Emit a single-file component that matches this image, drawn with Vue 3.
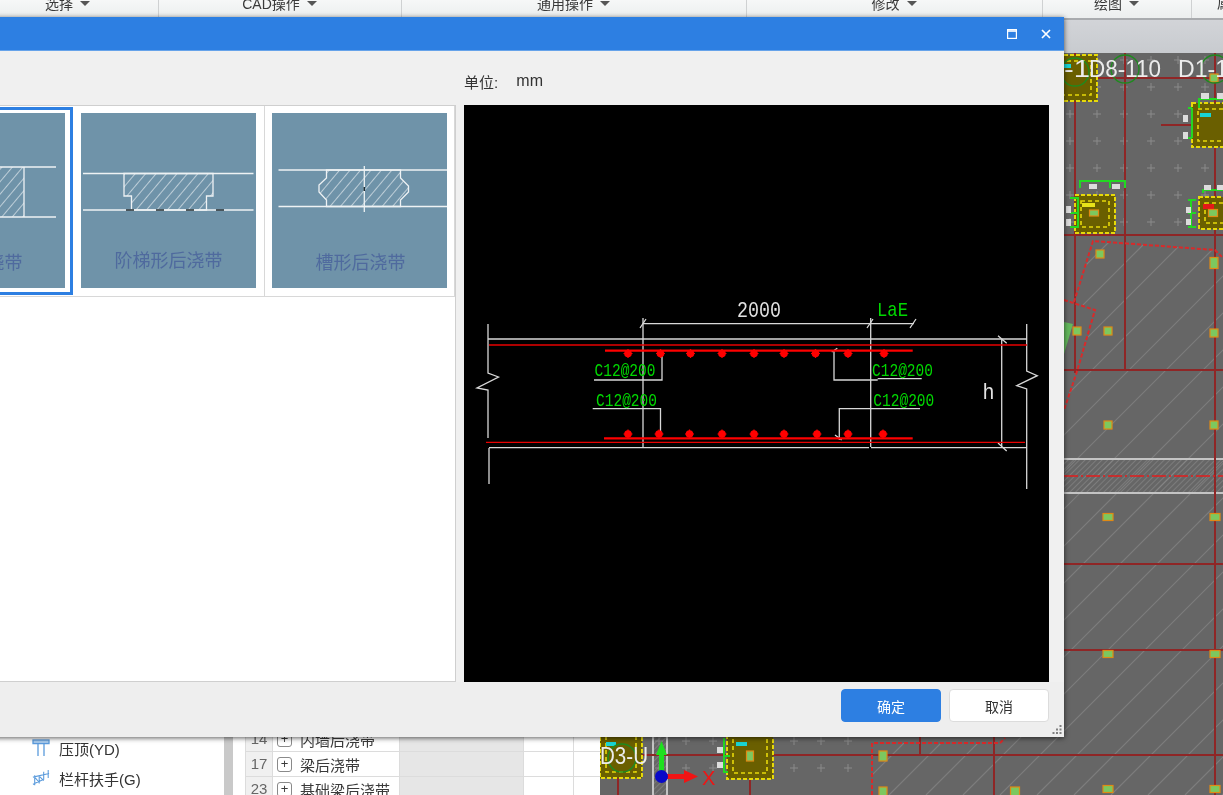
<template>
  <div class="app">
    <!-- 顶部工具栏 -->
    <div class="ribbon">
      <div v-for="g in ribbonGroups" :key="g.name" class="ribbon-group" :style="{ width: g.width + 'px' }">
        <span>{{ g.name }}</span><i class="caret"></i>
      </div>
      <div class="ribbon-last">属性</div>
    </div>
    <div class="ribbon-edge"></div>

    <div class="workspace">
      <!-- 构件树 -->
      <div class="tree">
        <div class="tree-list">
          <div class="tree-item">
            <svg viewBox="0 0 18 18" width="18" height="18" fill="none" stroke="#5b9bdc" stroke-width="1.3">
              <rect x="1" y="1" width="16" height="3.6" fill="#a9ccef" />
              <path d="M6 4.6V17M12 4.6V17" />
            </svg>
            <span>压顶(YD)</span>
          </div>
          <div class="tree-item">
            <svg viewBox="0 0 20 20" width="18" height="18" fill="none" stroke="#5b9bdc" stroke-width="1.2">
              <path d="M1 9l18-4M3 7v11M8 7v9M13 3v9M18 1v9M1 17l11-5M3 9l5 6M8 8l5 5" />
            </svg>
            <span>栏杆扶手(G)</span>
          </div>
        </div>
      </div>
      <div class="tree-scroll"></div>

      <!-- 构件列表 -->
      <div class="table-pane">
        <div v-for="r in rows" :key="r.no" class="row">
          <div class="cell-no">{{ r.no }}</div>
          <div class="cell-name"><i class="plus">+</i><span>{{ r.name }}</span></div>
          <div class="cell-gray"></div>
          <div class="cell-blank"></div>
        </div>
      </div>

      <!-- 绘图区 -->
      <div class="canvas-wrap">
        <div class="tab-strip"></div>
        <svg class="cad" width="623" height="742" viewBox="600 53 623 742">
          <defs>
            <clipPath id="slab"><polygon :points="slabPoints" /></clipPath>
            <pattern id="dense" width="4" height="4" patternUnits="userSpaceOnUse" patternTransform="rotate(45)">
              <line x1="0" y1="0" x2="0" y2="4" stroke="#8b8b8b" stroke-width="1.2" />
            </pattern>
          </defs>
          <rect x="600" y="53" width="623" height="742" fill="#666666" />

          <g stroke="#8a8a8a" stroke-width="1">
            <path v-for="c in crosses" :key="c.k" :d="c.d" />
          </g>

          <g clip-path="url(#slab)" stroke="#7d7d7d" stroke-width="1.2">
            <line v-for="l in hatchLines" :key="l" :x1="l" y1="795" :x2="l + 640" y2="155" />
          </g>

          <rect x="1064" y="460" width="159" height="33" fill="url(#dense)" />
          <rect x="653" y="737" width="14" height="58" fill="url(#dense)" />
          <path d="M1064 459H1223M1064 493H1223M653 737V795M667 737V795" stroke="#c4c4c4" stroke-width="2" />

          <g stroke="#8f2626" stroke-width="2">
            <path d="M1075 53V373M1125 53V370M1215 53V795M1064 78H1223M1161 125H1223M1064 235H1223M1064 370H1223M1064 564H1223M1064 650H1223M600 755H1223M618 737V795M750 737V795M920 737V755M994 737V795" />
          </g>
          <path d="M1064 476H1223" stroke="#e21c1c" stroke-width="1.4" stroke-dasharray="14 3 2 3" />

          <polyline v-for="(p, i) in slabOutlines" :key="i" :points="p" fill="none" stroke="#d92a2a" stroke-width="2" stroke-dasharray="4 2" />

          <!-- 柱 -->
          <g v-for="b in columns" :key="b.x + '-' + b.y">
            <rect :x="b.x" :y="b.y" :width="b.w" :height="b.h" fill="#6a5f00" stroke="#e6d90a" stroke-width="2" stroke-dasharray="4 2" />
            <rect :x="b.x + 6" :y="b.y + 6" :width="b.w - 12" :height="b.h - 12" fill="none" stroke="#e6d90a" stroke-width="1.6" stroke-dasharray="4 3" />
          </g>

          <g fill="none" stroke="#22d822" stroke-width="2">
            <path d="M1080 188V181H1125V188M1110 181V188M1070 198H1078V227H1070M1070 213H1078M1199 108V99H1223M1188 108H1192M1188 138H1192M1192 108V138M1203 193V190H1223M1191 200V227M1188 200H1196M1188 227H1196M1188 213H1196M724 738V772H728M724 756H730" />
          </g>

          <g fill="#dcdcdc">
            <rect v-for="t in tags" :key="t.x + '-' + t.y" :x="t.x" :y="t.y" :width="t.w" :height="t.h" />
          </g>
          <g fill="#19d4d4">
            <rect x="1064" y="64" width="7" height="4" />
            <rect x="1200" y="113" width="11" height="4" />
            <rect x="606" y="742" width="10" height="4" />
            <rect x="736" y="742" width="11" height="4" />
          </g>
          <rect x="1082" y="203" width="13" height="4" fill="#e8e21a" />
          <rect x="1203" y="204" width="11" height="5" fill="#e51818" />
          <polygon points="1064,322 1073,324 1064,354" fill="#63b85c" />

          <g fill="#7cc85f" stroke="#e08a14" stroke-width="1.2">
            <rect v-for="s in studs" :key="s.x + '-' + s.y" :x="s.x - s.w / 2" :y="s.y - s.h / 2" :width="s.w" :height="s.h" />
          </g>

          <g fill="none" stroke="#1f8a1f" stroke-width="1.4">
            <circle cx="1075" cy="72" r="14" />
            <circle cx="1125" cy="69" r="14" />
            <circle cx="1215" cy="69" r="14" />
            <circle cx="622" cy="758" r="14" />
          </g>
          <g class="axis-label">
            <text x="1064" y="77" textLength="26" lengthAdjust="spacingAndGlyphs">-1</text>
            <text x="1089" y="77" textLength="72" lengthAdjust="spacingAndGlyphs">D8-110</text>
            <text x="1178" y="77" textLength="50" lengthAdjust="spacingAndGlyphs">D1-1</text>
            <text x="600" y="764" textLength="48" lengthAdjust="spacingAndGlyphs">D3-U</text>
          </g>

          <!-- 坐标轴 -->
          <rect x="659" y="750" width="5" height="26" fill="#1fe01f" />
          <polygon points="661.5,741 667,755 656,755" fill="#1fe01f" />
          <rect x="662" y="774" width="22" height="5" fill="#f01414" />
          <polygon points="698,776.5 684,770 684,783" fill="#f01414" />
          <circle cx="661.5" cy="776.5" r="6.5" fill="#0808c8" />
          <text class="x-label" x="702" y="785">X</text>
        </svg>
      </div>
    </div>

    <!-- 弹窗 -->
    <div class="dialog">
      <div class="dialog-title">
        <svg class="win-icon" viewBox="0 0 10 10" width="10" height="10" fill="none" stroke="#fff" stroke-width="1.2">
          <rect x="0.6" y="0.6" width="8.8" height="8.8" />
          <path d="M0.6 2h8.8" stroke-width="1.6" />
        </svg>
        <svg class="win-icon close" viewBox="0 0 10 10" width="10" height="10" fill="none" stroke="#fff" stroke-width="1.7">
          <path d="M1 1l8 8M9 1l-8 8" />
        </svg>
      </div>

      <div class="dialog-body">
        <div class="gallery-col">
          <div class="gallery">
            <div class="thumb-row">
              <!-- 矩形 -->
              <div class="thumb selected">
                <svg width="175" height="175" viewBox="0 0 175 175">
                  <defs>
                    <pattern id="hatch" width="8" height="8" patternUnits="userSpaceOnUse" patternTransform="rotate(40)">
                      <line x1="0" y1="0" x2="0" y2="8" stroke="#fff" stroke-width="1.1" />
                    </pattern>
                  </defs>
                  <rect width="175" height="175" fill="#6f93a9" />
                  <rect x="42" y="54" width="92" height="50" fill="url(#hatch)" />
                  <path d="M10 54H166M10 104H166M42 54V104M134 54V104" stroke="#eef2f4" stroke-width="1.3" fill="none" />
                  <text x="87.5" y="156" class="thumb-label">矩形后浇带</text>
                </svg>
              </div>
              <!-- 阶梯形 -->
              <div class="thumb">
                <svg width="175" height="175" viewBox="0 0 175 175">
                  <rect width="175" height="175" fill="#6f93a9" />
                  <polygon points="43,60.5 132,60.5 132,83 125.5,83 125.5,97 50.5,97 50.5,83 43,83" fill="url(#hatch)" stroke="#eef2f4" stroke-width="1.3" />
                  <path d="M2 60.5H172.500M2 97H172.500" stroke="#eef2f4" stroke-width="1.3" fill="none" />
                  <path d="M45 97h8M75 97h8M105 97h8M135 97h8" stroke="#1d2a30" stroke-width="1.5" />
                  <text x="87.500" y="154" class="thumb-label">阶梯形后浇带</text>
                </svg>
              </div>
              <!-- 槽形 -->
              <div class="thumb">
                <svg width="175" height="175" viewBox="0 0 175 175">
                  <rect width="175" height="175" fill="#6f93a9" />
                  <polygon points="54.500,57 128.500,57 128.500,65 136.500,73 136.500,79 128.500,87 128.500,93.500 54.500,93.500 54.500,87 47,79 47,72 54.500,65" fill="url(#hatch)" stroke="#eef2f4" stroke-width="1.3" />
                  <path d="M6.500 57H175M6.500 93.500H175M92.300 53V99" stroke="#eef2f4" stroke-width="1.3" fill="none" />
                  <path d="M92.300 74v4" stroke="#1d2a30" stroke-width="1.5" />
                  <text x="88.500" y="156" class="thumb-label">槽形后浇带</text>
                </svg>
              </div>
            </div>
          </div>
        </div>

        <div class="preview-col">
          <div class="unit"><span>单位:</span><span class="unit-value">mm</span></div>
          <div class="preview">
            <svg width="585" height="577" viewBox="464 105 585 577">
              <g fill="none" stroke="#d8d8d8" stroke-width="1.300">
                <path d="M488 324V373L498.500 377L477 388L488 390V438M489 448V484" />
                <path d="M1026.700 324V371L1037.300 375.700L1016.700 385.700L1026.700 389V489" />
                <path d="M488 339H1027M489 447.700H869M871 447.700H1027" />
                <path d="M643 318V447.700M870.700 318V447" />
                <path d="M643 323.700H914" />
                <path d="M640 328L646 319M867 328L873 319M910 328L916 319" />
                <path d="M1001.700 339V447.700M998 335.700L1006.700 343.300M998 443L1006.700 451" />
                <path d="M594 380H662V355M592.700 408.700H660.500V433" />
                <path d="M831.700 352L837.300 348.300M834 350V380H877.700M877.700 378.700H921.700" />
                <path d="M920 408.700H839.300V440M835 435L841.700 440" />
              </g>
              <g fill="none" stroke="#e80000">
                <path d="M489 345H1027M486 442.300H1025" stroke-width="1.300" />
                <path d="M605 350.700H912.700M604 438.300H912.700" stroke-width="2.200" stroke="#ff0000" />
              </g>
              <g fill="#ff0000">
                <circle v-for="x in topBars" :key="'t' + x" :cx="x" cy="353.500" r="3.800" />
                <circle v-for="x in bottomBars" :key="'b' + x" :cx="x" cy="434" r="3.800" />
              </g>
              <path :d="barTicks" stroke="#ff0000" stroke-width="1.200" fill="none" />
              <g class="rebar-text">
                <text x="594.500" y="376" textLength="61" lengthAdjust="spacingAndGlyphs">C12@200</text>
                <text x="596" y="405.700" textLength="61" lengthAdjust="spacingAndGlyphs">C12@200</text>
                <text x="872" y="376" textLength="61" lengthAdjust="spacingAndGlyphs">C12@200</text>
                <text x="873.300" y="405.700" textLength="61" lengthAdjust="spacingAndGlyphs">C12@200</text>
                <text class="lae" x="877" y="316" textLength="31" lengthAdjust="spacingAndGlyphs">LaE</text>
              </g>
              <g class="dim-text">
                <text x="737" y="317" textLength="44" lengthAdjust="spacingAndGlyphs">2000</text>
                <text x="982.500" y="399" textLength="12" lengthAdjust="spacingAndGlyphs">h</text>
              </g>
            </svg>
          </div>
        </div>
      </div>

      <div class="dialog-foot">
        <button class="btn primary">确定</button>
        <button class="btn">取消</button>
        <svg class="grip" viewBox="0 0 10 10" width="10" height="10" fill="#808080">
          <rect x="7.500" y="0" width="2" height="2" />
          <rect x="4" y="3.500" width="2" height="2" />
          <rect x="7.500" y="3.500" width="2" height="2" />
          <rect x="0.500" y="7" width="2" height="2" />
          <rect x="4" y="7" width="2" height="2" />
          <rect x="7.500" y="7" width="2" height="2" />
        </svg>
      </div>
    </div>
  </div>
</template>

<script setup>
const ribbonGroups = [
  { name: '选择', width: 181 },
  { name: 'CAD操作', width: 243 },
  { name: '通用操作', width: 345 },
  { name: '修改', width: 296 },
  { name: '绘图', width: 149 },
]

const rows = [
  { no: 14, name: '内墙后浇带' },
  { no: 17, name: '梁后浇带' },
  { no: 23, name: '基础梁后浇带' },
]

const topBars = [628, 660.5, 690.5, 722, 754, 784, 815.5, 848, 884]
const bottomBars = [628, 659, 689.5, 722, 754, 784, 817, 848, 883]

// 钢筋点上的小十字
const tick = (x, y) => `M${x} ${y - 4.5}V${y + 4.5}M${x - 4.5} ${y}H${x + 4.5}`
const barTicks = [
  ...topBars.map((x) => tick(x, 353.5)),
  ...bottomBars.map((x) => tick(x, 434)),
].join('')

const slabPoints = '1093,241 1215,250 1223,258 1223,795 872,795 872,743 1005,743 1005,700 1064,700 1064,410 1095,310 1074,302'
const slabOutlines = [
  '1074,302 1093,241 1215,250 1223,258',
  '1064,300 1095,310 1076.500,373 1064,410',
  '872,795 872,743 1000,743 1005,738',
]

// 网格点
const crosses = []
for (let y = 60; y < 240; y += 27) {
  for (let x = 1070; x < 1223; x += 27) {
    crosses.push({ k: x + '-' + y, d: `M${x - 4} ${y}h8M${x} ${y - 4}v8` })
  }
}
for (let y = 741; y < 795; y += 27) {
  for (let x = 605; x < 870; x += 27) {
    crosses.push({ k: x + '-' + y, d: `M${x - 4} ${y}h8M${x} ${y - 4}v8` })
  }
}

const hatchLines = []
for (let x = 260; x < 1223; x += 37) hatchLines.push(x)

const columns = [
  { x: 1040, y: 55, w: 57, h: 46 },
  { x: 1192, y: 103, w: 60, h: 44 },
  { x: 1075, y: 195, w: 40, h: 38 },
  { x: 1199, y: 197, w: 50, h: 32 },
  { x: 600, y: 725, w: 42, h: 53 },
  { x: 727, y: 725, w: 46, h: 54 },
]

const studs = [
  { x: 1100, y: 254, w: 8, h: 8 },
  { x: 1214, y: 263, w: 8, h: 11 },
  { x: 1077, y: 331, w: 8, h: 8 },
  { x: 1108, y: 331, w: 8, h: 8 },
  { x: 1214, y: 333, w: 8, h: 8 },
  { x: 1108, y: 425, w: 8, h: 8 },
  { x: 1214, y: 425, w: 8, h: 8 },
  { x: 1108, y: 517, w: 10, h: 7 },
  { x: 1215, y: 517, w: 10, h: 7 },
  { x: 1108, y: 654, w: 10, h: 7 },
  { x: 1215, y: 654, w: 10, h: 7 },
  { x: 1108, y: 789, w: 10, h: 7 },
  { x: 1215, y: 789, w: 10, h: 7 },
  { x: 883, y: 756, w: 8, h: 10 },
  { x: 883, y: 792, w: 8, h: 10 },
  { x: 1015, y: 792, w: 9, h: 10 },
  { x: 1094, y: 213, w: 9, h: 6 },
  { x: 1213, y: 213, w: 9, h: 7 },
  { x: 1214, y: 78, w: 8, h: 8 },
  { x: 750, y: 756, w: 7, h: 10 },
]

const tags = [
  { x: 1201, y: 93, w: 8, h: 6 },
  { x: 1217, y: 93, w: 6, h: 6 },
  { x: 1183, y: 115, w: 5, h: 7 },
  { x: 1183, y: 132, w: 5, h: 7 },
  { x: 1089, y: 184, w: 8, h: 5 },
  { x: 1112, y: 184, w: 8, h: 5 },
  { x: 1066, y: 206, w: 5, h: 7 },
  { x: 1066, y: 219, w: 5, h: 7 },
  { x: 1204, y: 185, w: 7, h: 5 },
  { x: 1217, y: 185, w: 6, h: 5 },
  { x: 1186, y: 207, w: 5, h: 6 },
  { x: 1186, y: 219, w: 5, h: 6 },
  { x: 717, y: 747, w: 6, h: 6 },
  { x: 717, y: 762, w: 6, h: 6 },
]
</script>

<style>
html,
body {
  margin: 0;
  overflow: hidden;
}
</style>

<style scoped>
.app {
  position: relative;
  width: 1223px;
  height: 795px;
  overflow: hidden;
  background: #fff;
  font-family: "Liberation Sans", "Noto Sans CJK SC", sans-serif;
  font-size: 14px;
  color: #333;
  filter: blur(0.4px);
}

.ribbon {
  display: flex;
  height: 18px;
  margin-left: -23px;
  background: linear-gradient(#f6f7f7, #eceeee);
}

.ribbon-group {
  display: flex;
  align-items: center;
  justify-content: center;
  gap: 7px;
  height: 6px;
  padding-bottom: 12px;
  border-right: 1px solid #cfd1d2;
  box-sizing: content-box;
  flex-shrink: 0;
  color: #3a3a3a;
}

.ribbon-group:nth-child(n) {
  margin-right: -1px;
}

.caret {
  width: 0;
  height: 0;
  border-left: 5px solid transparent;
  border-right: 5px solid transparent;
  border-top: 5px solid #555;
}

.ribbon-last {
  padding: 0 0 0 26px;
  line-height: 6px;
  white-space: nowrap;
}

.ribbon-edge {
  height: 2px;
  background: #a9abae;
}

.workspace {
  display: flex;
  height: 775px;
}

.tree {
  width: 224px;
  flex-shrink: 0;
  padding-top: 718px;
  box-sizing: border-box;
}

.tree-list {
  display: flex;
  flex-direction: column;
  gap: 10px;
  padding-left: 32px;
}

.tree-item {
  display: flex;
  align-items: center;
  gap: 9px;
  height: 20px;
  font-size: 15px;
}

.tree-scroll {
  width: 9px;
  flex-shrink: 0;
  background: #c9c9c9;
}

.table-pane {
  width: 367px;
  flex-shrink: 0;
  box-sizing: border-box;
  padding: 707px 0 0 12px;
  background: #fff;
  overflow: hidden;
}

.row {
  display: grid;
  grid-template-columns: 27px 126px 124px 51px;
  height: 25px;
  border-bottom: 1px solid #dcdcdc;
  box-sizing: border-box;
  border-left: 1px solid #dcdcdc;
}

.cell-no {
  background: #f0f0f0;
  color: #666;
  font-size: 15px;
  line-height: 24px;
  text-align: center;
  border-right: 1px solid #dcdcdc;
}

.cell-name {
  display: flex;
  align-items: center;
  gap: 8px;
  padding-left: 4px;
  font-size: 15px;
  color: #3a3a3a;
}

.plus {
  width: 13px;
  height: 13px;
  border: 1px solid #8a8a8a;
  border-radius: 3px;
  font-style: normal;
  font-size: 13px;
  line-height: 12px;
  text-align: center;
  flex-shrink: 0;
}

.cell-gray {
  background: #e6e6e6;
  border-left: 1px solid #dcdcdc;
}

.cell-blank {
  border-left: 1px solid #dcdcdc;
  border-right: 1px solid #dcdcdc;
}

.canvas-wrap {
  flex: 1;
  min-width: 0;
}

.tab-strip {
  height: 33px;
  background: linear-gradient(#d2d4d8, #c8cbcf);
}

.cad {
  display: block;
}

.axis-label text {
  font-family: "Liberation Sans", sans-serif;
  font-size: 24px;
  fill: #ececec;
}

.x-label {
  font-family: "Liberation Sans", sans-serif;
  font-size: 20px;
  fill: #f01414;
}

.dialog {
  position: absolute;
  left: -120px;
  top: 17px;
  width: 1184px;
  height: 720px;
  display: flex;
  flex-direction: column;
  background: #f0f0f0;
  box-shadow: 0 1px 5px rgba(0, 0, 0, 0.65);
}

.dialog-title {
  display: flex;
  align-items: center;
  justify-content: flex-end;
  gap: 24px;
  height: 33px;
  padding-right: 13px;
  box-sizing: content-box;
  background: #2d7fe2;
  border-bottom: 1px solid #66a3ea;
  flex-shrink: 0;
}

.dialog-body {
  display: flex;
  gap: 8px;
  height: 631px;
  padding-left: 1px;
}

.gallery-col {
  width: 575px;
  padding-top: 54px;
  flex-shrink: 0;
}

.gallery {
  height: 577px;
  box-sizing: border-box;
  background: #fff;
  border: 1px solid #cfcfcf;
}

.thumb-row {
  display: flex;
  border-bottom: 1px solid #d8d8d8;
  height: 190px;
}

.thumb {
  width: 192px;
  height: 190px;
  box-sizing: border-box;
  display: flex;
  align-items: flex-start;
  justify-content: center;
  padding-top: 7px;
  border-right: 1px solid #d8d8d8;
}

.thumb:last-child {
  width: 191px;
}

.thumb svg {
  display: block;
}

.thumb.selected {
  border: 3px solid #2d7fe2;
  outline: 3px solid #fff;
  outline-offset: -6px;
  height: 188px;
  margin-top: 1px;
  padding-top: 3px;
}

.thumb-label {
  font-family: "Noto Sans CJK SC", sans-serif;
  font-size: 18px;
  fill: #4f6a9e;
  text-anchor: middle;
}

.preview-col {
  display: flex;
  flex-direction: column;
  width: 585px;
}

.unit {
  display: flex;
  gap: 18px;
  height: 54px;
  align-items: center;
  padding-top: 10px;
  box-sizing: border-box;
  font-size: 15px;
  color: #333;
  padding-bottom: 4px;
}

.unit-value {
  font-size: 16px;
  letter-spacing: 0.3px;
}

.preview {
  height: 577px;
  background: #000;
  overflow: hidden;
}

.preview svg {
  display: block;
}

.rebar-text text {
  font-family: "Liberation Mono", monospace;
  font-size: 18px;
  fill: #00d800;
}

.rebar-text .lae {
  font-size: 21px;
}

.dim-text text {
  font-family: "Liberation Mono", monospace;
  font-size: 22px;
  fill: #e2e2e2;
}

.dialog-foot {
  position: relative;
  display: flex;
  justify-content: flex-end;
  align-items: flex-start;
  gap: 8px;
  padding: 7px 15px 0 0;
  flex: 1;
  background: #eeeeee;
}

.btn {
  width: 100px;
  height: 33px;
  border: 1px solid #dcdcdc;
  border-radius: 4px;
  background: #fff;
  font-family: "Liberation Sans", "Noto Sans CJK SC", sans-serif;
  font-size: 14px;
  color: #333;
  padding: 0;
}

.btn.primary {
  background: #2d7fe2;
  border-color: #2d7fe2;
  color: #fff;
}

.grip {
  position: absolute;
  right: 2px;
  bottom: 2px;
}
</style>
